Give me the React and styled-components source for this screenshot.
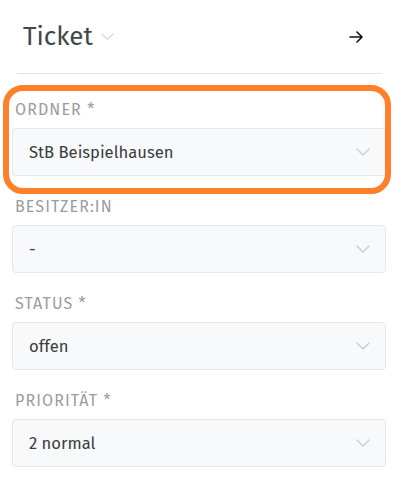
import React from "react"
import styled, { createGlobalStyle } from "styled-components"

const GlobalStyle = createGlobalStyle`
  html, body {
    margin: 0;
    padding: 0;
    background: #ffffff;
  }
  body {
    font-family: "Fira Sans", "Open Sans", "Noto Sans", sans-serif;
  }
`

const Panel = styled.div`
  width: 400px;
  height: 486px;
  box-sizing: border-box;
  padding: 0 14px 0 12px;
  background: #ffffff;
  overflow: hidden;
`

const Header = styled.div`
  height: 73px;
  margin: 0 4px 0 5px;
  padding: 0 19px 0 6px;
  display: flex;
  align-items: center;
  border-bottom: 1px solid #e4e4e4;
`

const Title = styled.h1`
  margin: 0;
  display: flex;
  align-items: center;
  gap: 8px;
  font-size: 26px;
  font-weight: 400;
  color: #42474c;
  flex-grow: 1;
`

const Fields = styled.div`
  padding-top: 26px;
`

const Field = styled.div`
  position: relative;
  margin-bottom: 21px;
  ${(p) =>
    p.highlight &&
    `
    &::after {
      content: "";
      position: absolute;
      top: -15px;
      left: -9px;
      right: -5px;
      bottom: -18px;
      border: 6px solid #ff7f2a;
      border-radius: 20px;
      pointer-events: none;
    }
  `}
`

const Label = styled.div`
  height: 20px;
  line-height: 20px;
  margin: 0 0 8px 3px;
  font-size: 16px;
  letter-spacing: 1.1px;
  text-transform: uppercase;
  color: #9b9c9e;
`

const Select = styled.div`
  height: 48px;
  box-sizing: border-box;
  display: flex;
  align-items: center;
  padding: 0 15px 0 16px;
  background: #f8f9fa;
  border: 1px solid #e6e7e8;
  border-radius: 4px;
  font-size: 16.6px;
  color: #3a3d40;
`

const Value = styled.span`
  flex-grow: 1;
`

const Chevron = ({ color = "#cfd0d2", width = 14 }) => (
  <svg width={width} height={width / 2 + 1} viewBox="0 0 14 8" fill="none">
    <path d="M1 1l6 6 6-6" stroke={color} strokeWidth="1.6" strokeLinecap="round" strokeLinejoin="round" />
  </svg>
)

const Arrow = () => (
  <svg width="14" height="12" viewBox="0 0 14 12" fill="none">
    <path d="M1 6h12M8 1l5 5-5 5" stroke="#111" strokeWidth="1.6" strokeLinecap="round" strokeLinejoin="round" />
  </svg>
)

const fields = [
  { label: "Ordner *", value: "StB Beispielhausen", highlight: true },
  { label: "Besitzer:in", value: "-" },
  { label: "Status *", value: "offen" },
  { label: "Priorität *", value: "2 normal" },
]

const App = () => (
  <>
    <GlobalStyle />
    <Panel>
      <Header>
        <Title>
          Ticket
          <Chevron color="#dcdddf" width={13} />
        </Title>
        <Arrow />
      </Header>
      <Fields>
        {fields.map((f) => (
          <Field key={f.label} highlight={f.highlight}>
            <Label>{f.label}</Label>
            <Select>
              <Value>{f.value}</Value>
              <Chevron />
            </Select>
          </Field>
        ))}
      </Fields>
    </Panel>
  </>
)

export default App
